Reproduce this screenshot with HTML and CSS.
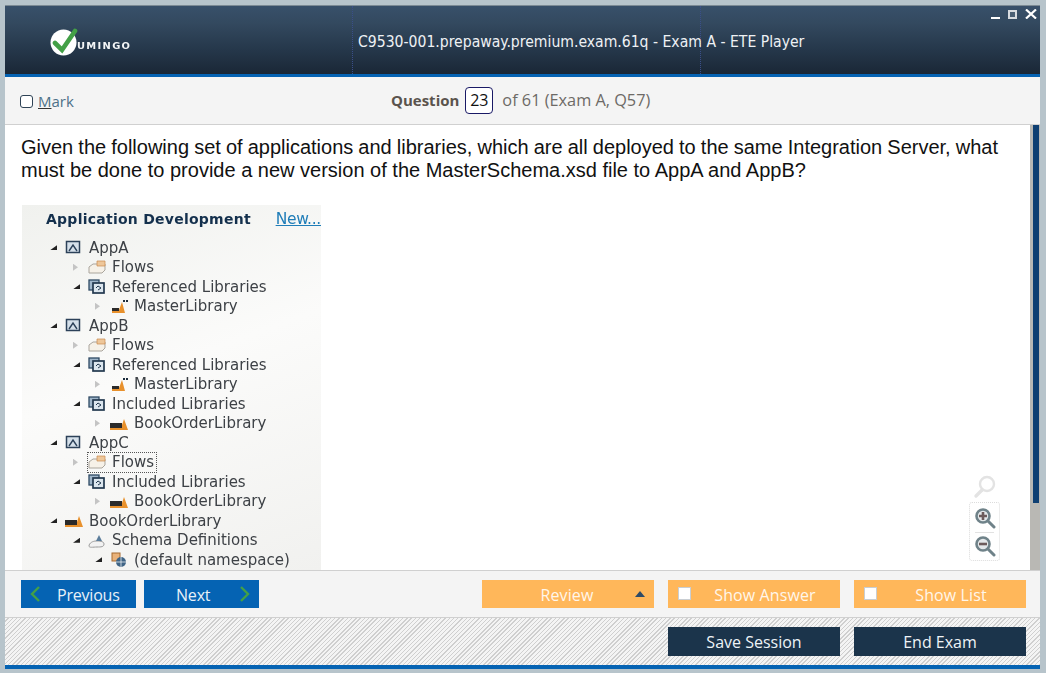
FILE: index.html
```html
<!DOCTYPE html>
<html lang="en">
<head>
<meta charset="utf-8">
<title>ETE Player</title>
<link rel="stylesheet" href="styles.css">
</head>
<body>
<svg class="defs" width="0" height="0" aria-hidden="true">
  <defs>
    <g id="app"><rect x="1.5" y="1.5" width="13" height="11" fill="#d5e0ea" stroke="#2c4159" stroke-width="1.5"/><path d="M4 11 8 5l4 6" fill="none" stroke="#2c4159" stroke-width="1.4"/></g>
    <g id="flows"><path d="M1 13V7l4-3h12v6l-3 3H2z" fill="#f6f1e8" stroke="#aaa59d"/><path d="M9 1h8v5H9z" fill="#eec79a" stroke="#c98a4e" stroke-width=".7"/></g>
    <g id="refs"><rect x="1" y="1" width="10" height="10" fill="#9fb5c9" stroke="#2f4a64" stroke-width="1.3"/><rect x="5" y="4" width="11" height="10" fill="#dce6ee" stroke="#22384e" stroke-width="1.7"/><path d="M8 9l2-2 3 2-3 2" fill="none" stroke="#22384e"/></g>
    <g id="lib"><path d="M0 14v-2h11l3-9 4 11z" fill="#e8912d"/><path d="M0 7h12v5H0z" fill="#2b2b2b"/><path d="M0 12h12v2H0z" fill="#e8912d"/></g>
    <g id="master"><path d="M2 14v-3h7l3-8 3 11z" fill="#e8912d"/><path d="M2 9h7v3H2z" fill="#2b2b2b"/><path d="M13 2h2M16 2h2" stroke="#1d2d3d" stroke-width="1.8"/></g>
    <g id="schema"><path d="M1 13c0-3 4-5 7-5s8 0 8 3-3 3-7 3-8 1-8-1z" fill="#f2f2f2" stroke="#9a9a9a"/><path d="M8 8l3-6 3 6z" fill="#5b7d9b"/></g>
    <g id="ns"><rect x="2" y="1" width="8" height="8" fill="#e9b27a" stroke="#a66a30"/><circle cx="11" cy="10" r="5" fill="#3f6485"/><path d="M6 10h10M11 5v10" stroke="#fff" stroke-width=".7"/></g>
  </defs>
</svg>
<div class="window">
  <header class="titlebar">
    <div class="brand-cell">
      <div class="logo">
        <svg class="logo-mark" width="28" height="28" viewBox="0 0 28 28" aria-hidden="true">
          <circle cx="13.5" cy="14.5" r="13" fill="#fff"/>
          <path d="M5 15l7 7L25 3" fill="none" stroke="#43a047" stroke-width="4.6" stroke-linecap="round" stroke-linejoin="miter"/>
        </svg>
        <span class="logo-text">UMINGO</span>
      </div>
    </div>
    <div class="title-cell"><span class="title">C9530-001.prepaway.premium.exam.61q - Exam A - ETE Player</span></div>
    <div class="end-cell"></div>
    <div class="winctl" aria-hidden="true">
      <span class="ctl-min"></span>
      <span class="ctl-max"></span>
      <svg width="12" height="10" viewBox="0 0 12 10"><path d="M1 .5l10 9M11 .5l-10 9" stroke="#fff" stroke-width="2.2"/></svg>
    </div>
  </header>

  <div class="toolbar">
    <label class="mark"><span class="mark-box"></span><span class="mark-label"><u>M</u>ark</span></label>
    <div class="progress">
      <strong>Question</strong>
      <span class="qnum">23</span>
      <span class="of">of 61 (Exam A, Q57)</span>
    </div>
  </div>

  <main class="content">
    <div class="pane">
      <p class="question"><span class="q-tight">Given the following set of applications and libraries, which are all deployed to the same Integration Server, what</span> must be done to provide a new version of the MasterSchema.xsd file to AppA and AppB?</p>
      <div class="shot">
        <div class="shot-head"><span class="shot-title">Application Development</span><span class="shot-link">New...</span></div>
        <div class="tree">
          <div class="node l0"><i class="tw open"></i><svg class="ico" viewBox="0 0 18 15"><use href="#app"/></svg>AppA</div>
          <div class="node l1"><i class="tw"></i><svg class="ico" viewBox="0 0 18 15"><use href="#flows"/></svg>Flows</div>
          <div class="node l1"><i class="tw open"></i><svg class="ico" viewBox="0 0 18 15"><use href="#refs"/></svg>Referenced Libraries</div>
          <div class="node l2"><i class="tw"></i><svg class="ico" viewBox="0 0 18 15"><use href="#master"/></svg>MasterLibrary</div>
          <div class="node l0"><i class="tw open"></i><svg class="ico" viewBox="0 0 18 15"><use href="#app"/></svg>AppB</div>
          <div class="node l1"><i class="tw"></i><svg class="ico" viewBox="0 0 18 15"><use href="#flows"/></svg>Flows</div>
          <div class="node l1"><i class="tw open"></i><svg class="ico" viewBox="0 0 18 15"><use href="#refs"/></svg>Referenced Libraries</div>
          <div class="node l2"><i class="tw"></i><svg class="ico" viewBox="0 0 18 15"><use href="#master"/></svg>MasterLibrary</div>
          <div class="node l1"><i class="tw open"></i><svg class="ico" viewBox="0 0 18 15"><use href="#refs"/></svg>Included Libraries</div>
          <div class="node l2"><i class="tw"></i><svg class="ico" viewBox="0 0 18 15"><use href="#lib"/></svg>BookOrderLibrary</div>
          <div class="node l0"><i class="tw open"></i><svg class="ico" viewBox="0 0 18 15"><use href="#app"/></svg>AppC</div>
          <div class="node l1"><i class="tw"></i><span class="focus"><svg class="ico" viewBox="0 0 18 15"><use href="#flows"/></svg>Flows</span></div>
          <div class="node l1"><i class="tw open"></i><svg class="ico" viewBox="0 0 18 15"><use href="#refs"/></svg>Included Libraries</div>
          <div class="node l2"><i class="tw"></i><svg class="ico" viewBox="0 0 18 15"><use href="#lib"/></svg>BookOrderLibrary</div>
          <div class="node l0"><i class="tw open"></i><svg class="ico" viewBox="0 0 18 15"><use href="#lib"/></svg>BookOrderLibrary</div>
          <div class="node l1"><i class="tw open"></i><svg class="ico" viewBox="0 0 18 15"><use href="#schema"/></svg>Schema Definitions</div>
          <div class="node l2"><i class="tw open"></i><svg class="ico" viewBox="0 0 18 15"><use href="#ns"/></svg>(default namespace)</div>
        </div>
      </div>
      <div class="zoomtools" aria-hidden="true">
        <svg class="zoom-fit" width="24" height="24" viewBox="0 0 24 24"><circle cx="14" cy="9" r="7" fill="#fff" stroke="#e3e3e3" stroke-width="2.4"/><path d="M9 15l-6 6" stroke="#e3e3e3" stroke-width="3.4" stroke-linecap="round"/></svg>
        <div class="zoom-box">
          <svg width="22" height="22" viewBox="0 0 22 22"><circle cx="9" cy="9" r="6.5" fill="#e4e8ea" stroke="#6f8289" stroke-width="2.6"/><path d="M14 14l6 6" stroke="#6f8289" stroke-width="3" stroke-linecap="round"/><path d="M5 9h8M9 5v8" stroke="#6d5b5b" stroke-width="2.6"/></svg>
          <span class="zoom-sep"></span>
          <svg width="22" height="22" viewBox="0 0 22 22"><circle cx="9" cy="9" r="6.5" fill="#e4e8ea" stroke="#6f8289" stroke-width="2.6"/><path d="M14 14l6 6" stroke="#6f8289" stroke-width="3" stroke-linecap="round"/><path d="M5 9h8" stroke="#6d5b5b" stroke-width="2.6"/></svg>
        </div>
      </div>
    </div>
    <div class="scrollbar"><div class="thumb"></div></div>
  </main>

  <div class="nav">
    <button class="btn btn-blue prev"><svg class="chev" width="12" height="18" viewBox="0 0 12 18"><path d="M10 2 3 9l7 7" fill="none" stroke="#43a047" stroke-width="2.4"/></svg><span class="btn-text">Previous</span></button>
    <button class="btn btn-blue next"><span class="btn-text">Next</span><svg class="chev" width="12" height="18" viewBox="0 0 12 18"><path d="M2 2l7 7-7 7" fill="none" stroke="#43a047" stroke-width="2.4"/></svg></button>
    <div class="nav-right">
      <button class="btn btn-orange review"><span class="btn-text">Review</span><i class="caret"></i></button>
      <button class="btn btn-orange check"><i class="box"></i><span class="btn-text">Show Answer</span></button>
      <button class="btn btn-orange check"><i class="box"></i><span class="btn-text">Show List</span></button>
    </div>
  </div>

  <div class="session">
    <button class="btn btn-navy">Save Session</button>
    <button class="btn btn-navy">End Exam</button>
  </div>
</div>
</body>
</html>
```

FILE: styles.css
```css
* { box-sizing: border-box; }
html, body { margin: 0; height: 100%; }
body { background: #b7c4cb; overflow: hidden; font-family: "Open Sans", "Liberation Sans", sans-serif; }
.defs { position: absolute; }
.window { margin: 5px 6px 0 5px; height: 664px; display: flex; flex-direction: column; border-top: 1px solid #7c8a94; position: relative; background: #f4f4f4; }

.titlebar { height: 68px; flex: none; display: grid; grid-template-columns: 348px 348px 1fr; position: relative;
  background: linear-gradient(#38506a 0%, #33495f 25%, #25374a 65%, #1a2736 100%); }
.brand-cell, .title-cell { border-right: 1px dotted #3a4f8a; }
.logo { display: flex; align-items: flex-end; margin: 20px 0 0 45px; }
.logo-mark { flex: none; margin-top: 2px; }
.logo-text { color: #f4f6f7; font: 700 9px "DejaVu Sans", sans-serif; letter-spacing: 1.2px; margin: 0 0 5px -1px; transform: scaleX(1.1); transform-origin: left; }
.title-cell { padding: 24px 0 0 5px; white-space: nowrap; }
.title { color: #eef1f4; font: 15.6px/20px "DejaVu Sans Condensed", "DejaVu Sans", sans-serif; font-stretch: condensed; }
.winctl { position: absolute; top: 3px; right: 3px; display: flex; align-items: center; gap: 8px; }
.ctl-min { width: 9px; height: 2px; background: #fff; align-self: flex-end; }
.ctl-max { width: 9px; height: 9px; border: 2px solid #d7dbe0; background: #4a5f74; }

.toolbar { height: 51px; flex: none; border-top: 3px solid #0563b3; border-bottom: 1px solid #d0d0d0; background: #f4f4f4; position: relative; display: flex; align-items: center; padding: 2px 0 0 15px; }
.mark { display: flex; align-items: center; gap: 5px; font: 15px/18px "Open Sans", sans-serif; color: #4d7188; }
.mark-box { width: 13px; height: 13px; border: 1px solid #2f4356; border-radius: 3px; background: #fff; }
.mark-label { margin-top: -1px; }
.mark-label u { text-decoration-color: #333; }
.progress { position: absolute; left: 386px; top: 10px; display: flex; align-items: center; gap: 9px; font: 15px/27px "Open Sans", sans-serif; color: #6d6a66; }
.progress strong { color: #5a534d; font-weight: 700; margin-right: -3px; }
.of { font-size: 16.3px; }
.qnum { width: 28px; height: 27px; text-align: center; border: 1px solid #1a1a66; border-radius: 4px; background: #fff; color: #111; font-size: 16px; line-height: 25px; }

.content { flex: 1; min-height: 0; display: flex; background: #fff; }
.pane { flex: 1; position: relative; padding: 11px 32px 0 16px; overflow: hidden; }
.question { margin: 0 0 23px; color: #111; font: 20px/23px "Liberation Sans", Arial, sans-serif; text-align: justify; }
.q-tight { word-spacing: -1.6px; }
.scrollbar { flex: none; width: 10px; background: #b9b8b4; padding: 0 1px 0 3px; }
.thumb { height: 378px; background: #0f3f72; }

.shot { width: 299px; height: 365px; margin-left: 1px; padding: 6px 0 0 24px; overflow: hidden; background: linear-gradient(160deg, #f0f1ee 0%, #fbfbfa 45%, #f1f1ef 100%); font-family: "DejaVu Sans", sans-serif; color: #3d4146; }
.shot-head { display: flex; justify-content: space-between; font-weight: 700; font-size: 14px; line-height: 17px; filter: blur(.4px); margin-bottom: 10px; white-space: nowrap; }
.shot-title { color: #14304d; letter-spacing: .25px; }
.shot-link { color: #1f7db8; font-weight: 400; text-decoration: underline; font-size: 15.5px; letter-spacing: -.3px; }
.tree { filter: blur(.4px); }
.node { display: flex; align-items: center; height: 19.5px; font-size: 15px; white-space: nowrap; }
.l0 { padding-left: 4px; }
.l1 { padding-left: 27px; }
.l2 { padding-left: 49px; }
.tw { width: 5px; height: 7px; margin-right: 10px; background: #c4c4c4; clip-path: polygon(0 0, 100% 50%, 0 100%); flex: none; }
.tw.open { width: 7px; height: 5px; background: #222; clip-path: polygon(100% 0, 100% 100%, 0 100%); margin-right: 8px; }
.ico { width: 18px; height: 15px; margin-right: 6px; flex: none; }
.focus { display: flex; align-items: center; outline: 1px dotted #555; padding-right: 2px; height: 19px; }

.zoomtools { position: absolute; left: 964px; top: 350px; display: flex; flex-direction: column; align-items: center; gap: 3px; }
.zoom-fit { margin-right: -1px; }
.zoom-box { width: 31px; height: 59px; display: flex; flex-direction: column; align-items: center; justify-content: space-between; padding: 4px 0 3px; border: 1px dotted #dcdcdc; border-radius: 3px; background: #fff; }
.zoom-sep { width: 19px; height: 1px; background: #e2e2e2; }

.nav { height: 48px; flex: none; display: flex; align-items: center; gap: 8px; padding: 0 14px 0 16px; background: #f4f4f4; border-top: 1px solid #d0d0d0; border-bottom: 1px solid #d0d0d0; }
.nav-right { margin-left: auto; display: flex; gap: 14px; }
.btn { border: 0; height: 28px; padding: 0; font: 16px "Open Sans", "Liberation Sans", sans-serif; display: flex; align-items: center; color: #fff; position: relative; }
.btn-text { letter-spacing: -.2px; padding-top: 2px; }
.btn-blue { width: 115px; background: #0563b3; color: #e8f1f8; }
.prev { padding-left: 8px; }
.prev .btn-text { margin-left: 16px; }
.next { padding-left: 32px; justify-content: space-between; padding-right: 8px; }
.btn-orange { width: 172px; background: #ffb75a; color: #fff6ea; justify-content: center; }
.btn-orange .btn-text { letter-spacing: .1px; }
.review { padding-right: 2px; }
.caret { position: absolute; right: 9px; top: 11px; width: 0; height: 0; border-style: solid; border-width: 0 5px 6px; border-color: transparent transparent #2d4a66; }
.box { position: absolute; left: 10px; top: 7px; width: 13px; height: 13px; background: #fff; border: 1px solid #c9ced3; }
.check { padding-left: 22px; }

.session { flex: none; height: 51px; display: flex; justify-content: flex-end; gap: 14px; padding: 9px 14px 0 0; border-bottom: 4px solid #0563b3;
  background: repeating-linear-gradient(135deg, #f4f4f4 0 2px, #cfcfcf 2px 3px); }
.btn-navy { width: 172px; height: 29px; background: #1b344b; color: #eef3f7; justify-content: center; }
```
